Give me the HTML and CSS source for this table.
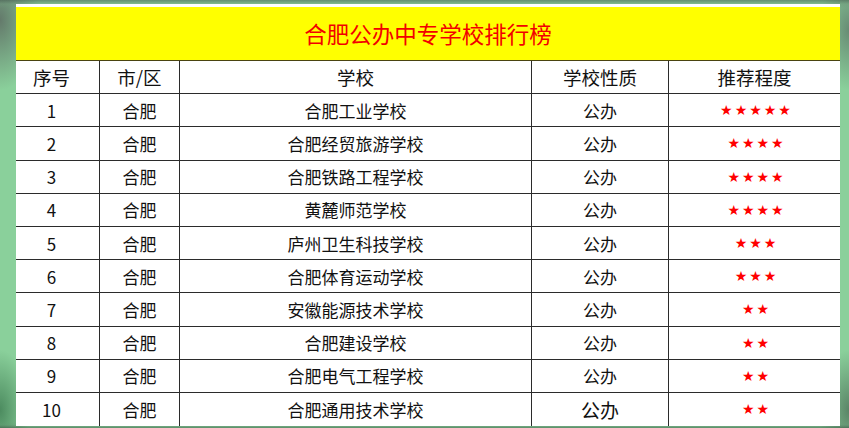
FILE: index.html
```html
<!DOCTYPE html>
<html lang="zh">
<head>
<meta charset="utf-8">
<title>合肥公办中专学校排行榜</title>
<link rel="stylesheet" href="styles.css">
</head>
<body>
<div class="page">
  <div class="sheet">
    <div class="title">合肥公办中专学校排行榜</div>
    <div class="row head">
      <div class="c">序号</div><div class="c">市/区</div><div class="c">学校</div><div class="c">学校性质</div><div class="c">推荐程度</div>
    </div>
    <div class="row"><div class="c">1</div><div class="c">合肥</div><div class="c">合肥工业学校</div><div class="c">公办</div><div class="c stars">★★★★★</div></div>
    <div class="row"><div class="c">2</div><div class="c">合肥</div><div class="c">合肥经贸旅游学校</div><div class="c">公办</div><div class="c stars">★★★★</div></div>
    <div class="row"><div class="c">3</div><div class="c">合肥</div><div class="c">合肥铁路工程学校</div><div class="c">公办</div><div class="c stars">★★★★</div></div>
    <div class="row"><div class="c">4</div><div class="c">合肥</div><div class="c">黄麓师范学校</div><div class="c">公办</div><div class="c stars">★★★★</div></div>
    <div class="row"><div class="c">5</div><div class="c">合肥</div><div class="c">庐州卫生科技学校</div><div class="c">公办</div><div class="c stars">★★★</div></div>
    <div class="row"><div class="c">6</div><div class="c">合肥</div><div class="c">合肥体育运动学校</div><div class="c">公办</div><div class="c stars">★★★</div></div>
    <div class="row"><div class="c">7</div><div class="c">合肥</div><div class="c">安徽能源技术学校</div><div class="c">公办</div><div class="c stars">★★</div></div>
    <div class="row"><div class="c">8</div><div class="c">合肥</div><div class="c">合肥建设学校</div><div class="c">公办</div><div class="c stars">★★</div></div>
    <div class="row"><div class="c">9</div><div class="c">合肥</div><div class="c">合肥电气工程学校</div><div class="c">公办</div><div class="c stars">★★</div></div>
    <div class="row last"><div class="c">10</div><div class="c">合肥</div><div class="c">合肥通用技术学校</div><div class="c big">公办</div><div class="c stars">★★</div></div>
  </div>
</div>
</body>
</html>
```

FILE: styles.css
```css
html, body {
  margin: 0;
  padding: 0;
}
body {
  width: 849px;
  height: 428px;
  overflow: hidden;
  font-family: "Noto Sans CJK SC", "Noto Sans", sans-serif;
  background:
    linear-gradient(180deg, rgba(70,90,80,0.55) 0px, rgba(110,150,120,0.35) 4px, rgba(0,0,0,0) 8px),
    linear-gradient(0deg, rgba(60,90,70,0.6) 0px, rgba(100,150,115,0.3) 3px, rgba(0,0,0,0) 6px),
    radial-gradient(ellipse 40px 70px at 0px 20px, rgba(90,100,95,0.8), rgba(0,0,0,0) 100%),
    radial-gradient(ellipse 30px 60px at 849px 30px, rgba(90,110,100,0.7), rgba(0,0,0,0) 100%),
    radial-gradient(ellipse 30px 60px at 0px 410px, rgba(50,110,70,0.7), rgba(0,0,0,0) 100%),
    radial-gradient(ellipse 30px 60px at 849px 410px, rgba(70,100,80,0.7), rgba(0,0,0,0) 100%),
    #8ad09b;
}
.page {
  padding: 4px 9px 0 16px;
}
.sheet {
  width: 824px;
  background: #ffffff;
  padding-top: 3px;
}
.title {
  background: #ffff00;
  color: #f20000;
  font-size: 22.5px;
  text-align: center;
  border-bottom: 1px solid #4a4410;
  box-sizing: border-box;
  height: 54px;
  line-height: 52px;
}
.row {
  display: grid;
  grid-template-columns: 84px 80px 352px 137px 171px;
  height: 33.2px;
  border-bottom: 1px solid #2b2b2b;
  box-sizing: border-box;
  font-size: 17px;
  color: #111;
}
.row.last {
  border-bottom: none;
  height: 33px;
}
.head {
  font-size: 18.5px;
}
.c {
  display: flex;
  align-items: center;
  justify-content: center;
  border-right: 1px solid #2b2b2b;
}
.c:first-child {
  padding-right: 12px;
}
.c:last-child {
  border-right: none;
}
.stars {
  color: #ff0000;
  font-family: "DejaVu Sans", sans-serif;
  font-size: 14px;
  letter-spacing: 2px;
  padding-left: 4px;
}
.big {
  font-size: 19px;
}
```
